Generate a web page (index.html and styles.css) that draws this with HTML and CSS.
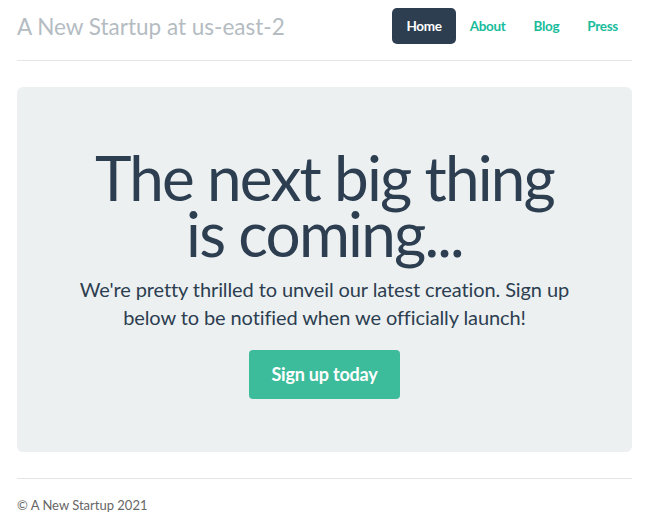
FILE: index.html
```html
<!DOCTYPE html>
<html lang="en">
	<head>
		<meta charset="utf-8"/>
		<title>A New Startup</title>
		<link rel="stylesheet" href="styles.css">
	</head>
	<body>
		<div class="container">
			<div class="header flex">
				<h3 class="brand">A New Startup at us-east-2</h3>
				<ul class="nav flex">
					<li class="active"><a href="#">Home</a></li>
					<li><a href="#">About</a></li>
					<li><a href="#">Blog</a></li>
					<li><a href="#">Press</a></li>
				</ul>
			</div>

			<div class="jumbotron">
				<h1>The next big thing<br>is coming...</h1>
				<p class="lead">We're pretty thrilled to unveil our latest creation. Sign up below to be notified when we officially launch!</p>
				<a class="btn" href="#">Sign up today</a>
			</div>

			<div class="footer">
				<p>&copy; A New Startup 2021</p>
			</div>
		</div>
	</body>
</html>
```

FILE: styles.css
```css
html, body {
	padding: 0; border: 0; margin: 0;
	background: #fff;
	font-family: Lato, "Open Sans", sans-serif;
	color: #2c3e50;
}
.flex {
	display: flex;
}
.container {
	padding: 0 20px 0 17px;
}

.header {
	justify-content: space-between;
	align-items: center;
	padding: 8px 0 16px;
	border-bottom: 1px solid #e5e5e5;
}
.brand {
	margin: 0;
	font-size: 22.5px;
	font-weight: 400;
	color: #b4bcc2;
}
.nav {
	list-style: none;
	margin: 0;
	padding: 0;
}
.nav li a {
	display: block;
	height: 36px;
	line-height: 36px;
	padding: 0 14px;
	border-radius: 5px;
	font-size: 13.5px;
	font-weight: 700;
	letter-spacing: -0.3px;
	text-decoration: none;
	color: #18bc9c;
}
.nav li.active a {
	background: #2c3e50;
	color: #fff;
}

.jumbotron {
	margin-top: 26px;
	padding: 62px 20px 53px;
	background: #ecf0f1;
	border-radius: 6px;
	text-align: center;
}
.jumbotron h1 {
	margin: 0 0 14px;
	font-size: 62px;
	line-height: 56px;
	font-weight: 400;
	letter-spacing: -1.8px;
}
.lead {
	margin: 0 auto 19px;
	max-width: 500px;
	font-size: 20px;
	line-height: 28px;
	letter-spacing: -0.1px;
}
.btn {
	display: inline-block;
	width: 151px;
	height: 49px;
	line-height: 49px;
	box-sizing: border-box;
	background: #3dbc9c;
	color: #fff;
	font-size: 18px;
	font-weight: 700;
	letter-spacing: -0.2px;
	border-radius: 4px;
	text-decoration: none;
}

.footer {
	margin-top: 26px;
	border-top: 1px solid #e5e5e5;
}
.footer p {
	margin: 0;
	padding-top: 18px;
	font-size: 13px;
	color: #666;
}
```
